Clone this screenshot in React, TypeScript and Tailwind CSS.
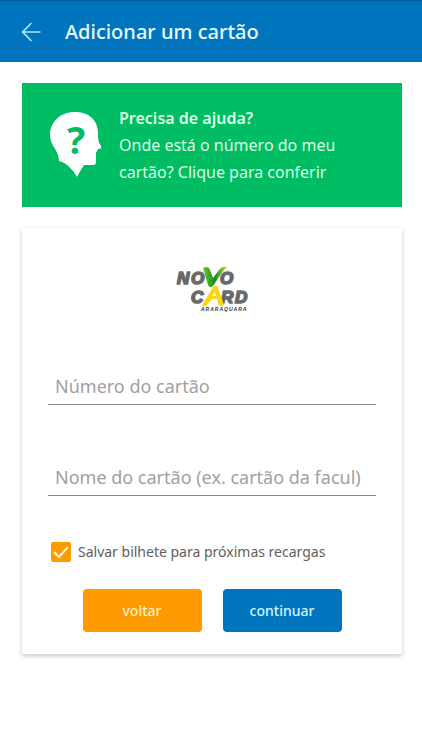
import React from "react";

function BackArrow() {
  return (
    <svg className="h-5 w-5" viewBox="0 0 20 20" fill="none" stroke="#a5e6ff" strokeWidth="1.7" aria-hidden="true">
      <path d="M19.5 10H2M10.5 1L1.6 10l8.9 9" />
    </svg>
  );
}

function HeadIcon() {
  return (
    <svg className="h-[66px] w-[52px] shrink-0" viewBox="0 0 52 66" aria-hidden="true">
      <path
        d="M25 0C10 0 0 10 0 23c0 11 9 15 9 26 8 2 14 9 18 16 3-6 6-10 7-12h9c2 0 3-1 3-3v-8c0-3 2-3 2-5 3 0 4-1 3-3-2-3-3-6-3-10C49 9 40 0 25 0Z"
        fill="#fff"
      />
      <text x="26" y="42" textAnchor="middle" fontSize="38" fontWeight="700" fontFamily="'Noto Sans', sans-serif" fill="#00bd63">
        ?
      </text>
    </svg>
  );
}

function Logo() {
  return (
    <svg className="mx-auto h-12 w-20" viewBox="0 0 80 48" role="img" aria-label="Novo Card Araraquara">
      <defs>
        <linearGradient id="steel" x1="0" y1="0" x2="0" y2="1">
          <stop offset="0" stopColor="#999" />
          <stop offset="0.5" stopColor="#505050" />
          <stop offset="1" stopColor="#888" />
        </linearGradient>
        <linearGradient id="leaf" x1="0" y1="0" x2="1" y2="0">
          <stop offset="0" stopColor="#79c51b" />
          <stop offset="0.5" stopColor="#118c2b" />
          <stop offset="1" stopColor="#c6df38" />
        </linearGradient>
        <linearGradient id="sun" x1="0" y1="0" x2="0" y2="1">
          <stop offset="0" stopColor="#f2d529" />
          <stop offset="1" stopColor="#ffd900" />
        </linearGradient>
      </defs>
      <g fontFamily="'Liberation Sans', Arial, sans-serif" fontWeight="700" fontStyle="italic" fill="url(#steel)" stroke="#6a6a6a" strokeWidth="1.7" strokeLinejoin="round">
        <text x="5" y="20" fontSize="17">N</text>
        <text x="19" y="20" fontSize="17">O</text>
        <text x="48" y="20" fontSize="17">O</text>
        <text x="19" y="39" fontSize="17">C</text>
        <text x="49" y="39" fontSize="17">R</text>
        <text x="63" y="39" fontSize="17">D</text>
      </g>
      <path d="M31 4c3-2 6-1 7 2l3 8 6-8c2-3 5-4 8-3-3 3-7 8-10 13l-4 6c-2 2-4 1-5-1L31 4Z" fill="url(#leaf)" />
      <path d="M42 22c2-1 4 0 4 2l6 17c-3 2-5 1-6-2l-1-4h-5l-5 6c-2 2-4 1-5 0 4-6 7-12 12-19Zm1 6-3 4h4l-1-4Z" fill="url(#sun)" />
      <text x="29" y="47" fontFamily="'Liberation Sans', Arial, sans-serif" fontSize="5" fontWeight="700" fontStyle="italic" letterSpacing="1" fill="#333">
        ARARAQUARA
      </text>
    </svg>
  );
}

function Field({ id, label }: { id: string; label: string }) {
  return (
    <div className="relative h-[45px] border-b border-[#858585]">
      <input
        id={id}
        type="text"
        placeholder=" "
        className="peer h-11 w-full bg-transparent px-[7px] pt-2 text-lg text-gray-700 outline-none"
      />
      <label
        htmlFor={id}
        className="pointer-events-none absolute top-3 left-[7px] text-lg leading-7 text-[#a0a0a0] peer-[:not(:placeholder-shown)]:hidden"
      >
        {label}
      </label>
    </div>
  );
}

export default function App() {
  return (
    <div className="min-h-screen bg-white font-['Noto_Sans',sans-serif]">
      <header className="flex h-[62px] items-center gap-6 border-t border-[#005f9c] bg-[#0075be] px-[21px]">
        <button type="button" aria-label="Voltar à página anterior">
          <BackArrow />
        </button>
        <h1 className="text-xl font-medium text-[#e8fbff]">Adicionar um cartão</h1>
      </header>

      <main className="flex flex-col gap-[21px] pt-[21px] pr-5 pb-8 pl-[22px] sm:mx-auto sm:max-w-xl">
        <a href="#ajuda" className="flex h-[124px] items-center gap-[17px] bg-[#00bd63] px-7 text-[#dcffe5]">
          <HeadIcon />
          <div className="text-base leading-[27px]">
            <strong className="block font-semibold">Precisa de ajuda?</strong>
            <span className="block">Onde está o número do meu cartão? Clique para conferir</span>
          </div>
        </a>

        <form className="rounded-xs bg-white px-[26px] pt-9 pb-[22px] shadow-[0_2px_5px_rgba(0,0,0,0.22)]" onSubmit={(e) => e.preventDefault()}>
          <Logo />
          <div className="mt-12 flex flex-col gap-[46px]">
            <Field id="numero" label="Número do cartão" />
            <Field id="nome" label="Nome do cartão (ex. cartão da facul)" />
          </div>
          <div className="mt-[46px] flex items-center gap-[7px] px-[3px]">
            <span className="relative h-5 w-5">
              <input id="salvar" type="checkbox" defaultChecked className="peer block h-5 w-5 appearance-none rounded-xs border-2 border-[#ff9900] checked:bg-[#ff9900]" />
              <svg className="pointer-events-none absolute inset-0 h-5 w-5 opacity-0 peer-checked:opacity-100" viewBox="0 0 20 20" fill="none" stroke="#fff8dc" strokeWidth="2" aria-hidden="true">
                <path d="m3 10 5 5 9-10" />
              </svg>
            </span>
            <label htmlFor="salvar" className="text-sm text-[#606060]">Salvar bilhete para próximas recargas</label>
          </div>
          <div className="mt-[27px] flex justify-center gap-[21px]">
            <button type="button" className="h-[43px] w-[119px] rounded-sm bg-[#ff9900] text-sm font-medium text-[#fff3c4]">voltar</button>
            <button type="submit" className="h-[43px] w-[119px] rounded-sm bg-[#0075be] text-sm font-medium text-[#cff5ff]">continuar</button>
          </div>
        </form>
      </main>
    </div>
  );
}
